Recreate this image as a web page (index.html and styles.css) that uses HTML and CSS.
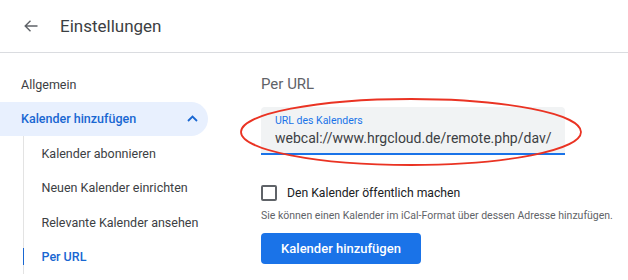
FILE: index.html
```html
<!doctype html>
<html>
<head>
<meta charset="utf-8">
<title>Einstellungen</title>
<link rel="stylesheet" href="styles.css">
</head>
<body>
<div class="top">
	<svg class="back" width="14" height="12" viewBox="0 0 14 12"><path d="M13.5 6H1.2M6.5 0.8L1.2 6l5.3 5.2" fill="none" stroke="#5f6368" stroke-width="1.4"/></svg>
	<span class="title">Einstellungen</span>
</div>
<div class="page">
	<div class="nav">
		<div class="item">Allgemein</div>
		<div class="item open">Kalender hinzufügen
			<svg width="11" height="7" viewBox="0 0 11 7"><path d="M1 6L5.5 1.5 10 6" fill="none" stroke="#1967d2" stroke-width="1.8"/></svg>
		</div>
		<div class="sub">
			<div class="subitem first">Kalender abonnieren</div>
			<div class="subitem">Neuen Kalender einrichten</div>
			<div class="subitem">Relevante Kalender ansehen</div>
			<div class="subitem active">Per URL</div>
		</div>
	</div>
	<div class="main">
		<h2>Per URL</h2>
		<div class="field">
			<label>URL des Kalenders</label>
			<div class="value">webcal://www.hrgcloud.de/remote.php/dav/</div>
			<svg class="mark" width="346" height="72" viewBox="0 0 346 72"><ellipse cx="172" cy="35" rx="170" ry="33" fill="none" stroke="#ea3323" stroke-width="1.8"/></svg>
		</div>
		<div class="check"><span class="box"></span>Den Kalender öffentlich machen</div>
		<p class="hint">Sie können einen Kalender im iCal-Format über dessen Adresse hinzufügen.</p>
		<button class="add">Kalender hinzufügen</button>
	</div>
</div>
</body>
</html>
```
FILE: styles.css
```css
body{
	margin:0;
	font-family:Roboto, "Liberation Sans", sans-serif;
	color:#3c4043;
	background:#fff;
	width:628px;
	height:280px;
	overflow:hidden;
}
.top{
	height:52px;
	border-bottom:1px solid #dadce0;
	display:flex;
	align-items:center;
}
.back{
	margin-left:24px;
	margin-right:22px;
}
.title{
	font-size:17px;
	color:#3c4043;
	margin-top:-1px;
}
.page{
	display:flex;
	padding-top:14px;
}
.nav{
	width:208px;
	font-size:12.5px;
}
.item{
	height:34.5px;
	display:flex;
	align-items:center;
	padding-left:21px;
	padding-right:10px;
}
.item.open{
	background:#e8f0fe;
	color:#1967d2;
	font-weight:500;
	border-radius:0 18px 18px 0;
	justify-content:space-between;
}
.sub{
	margin-left:23px;
	margin-top:7px;
	border-left:1.5px solid #e3e3e3;
}
.subitem{
	height:34.5px;
	display:flex;
	align-items:center;
	margin-left:-1.5px;
}
.subitem.first{
	margin-top:-7px;
}
.subitem::before{
	content:'';
	width:1.5px;
	height:17px;
	margin-right:17.5px;
}
.subitem.active{
	color:#1967d2;
	font-weight:500;
}
.subitem.active::before{
	background:#1967d2;
}
.main{
	margin-left:53px;
	width:360px;
}
h2{
	margin:0;
	height:35px;
	line-height:34px;
	font-size:15px;
	font-weight:400;
	color:#5f6368;
}
.field{
	position:relative;
	margin-top:5px;
	width:290px;
	height:46px;
	background:#f1f3f4;
	border-radius:4px 4px 0 0;
	border-bottom:2px solid #1a73e8;
	padding-left:14px;
}
.field label{
	display:block;
	padding-top:7px;
	font-size:10.5px;
	color:#1a73e8;
}
.value{
	font-size:14px;
	margin-top:3px;
	color:#3c4043;
}
.mark{
	position:absolute;
	left:-22px;
	top:-10px;
}
.check{
	display:flex;
	align-items:center;
	margin-top:30px;
	font-size:12.2px;
	color:#202124;
}
.box{
	width:12px;
	height:12px;
	border:2px solid #5f6368;
	border-radius:2px;
	margin-right:10px;
}
.hint{
	margin:8px 0 0;
	font-size:10.5px;
	color:#5f6368;
	white-space:nowrap;
}
.add{
	margin-top:11px;
	width:160px;
	height:31px;
	border:0;
	border-radius:4px;
	background:#1a73e8;
	color:#fff;
	font-family:Roboto, "Liberation Sans", sans-serif;
	font-size:13px;
	font-weight:500;
}
```
